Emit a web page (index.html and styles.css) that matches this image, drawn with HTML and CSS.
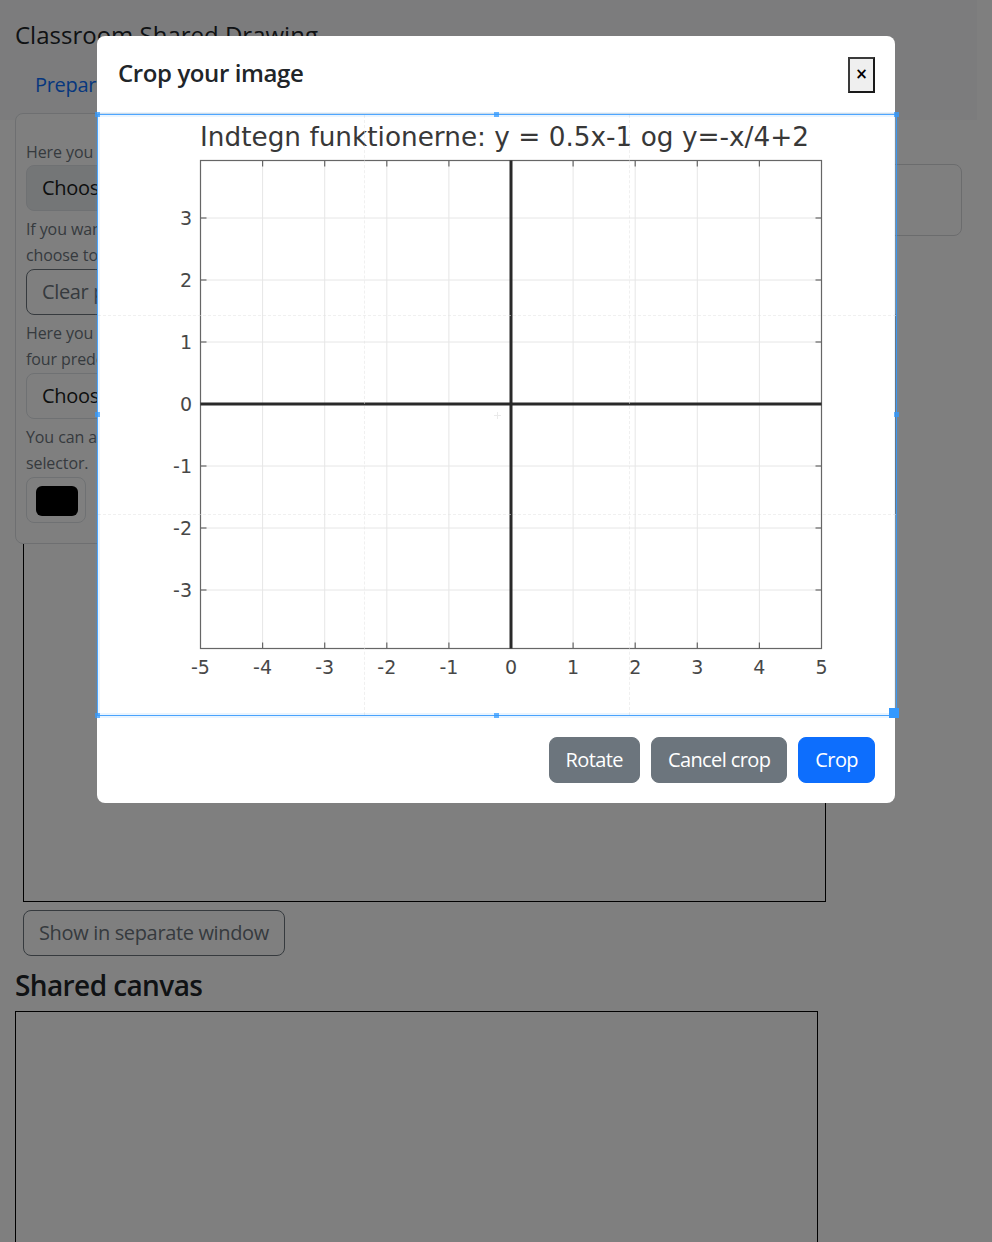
FILE: index.html
```html
<!DOCTYPE html>
<html lang="en">
<head>
<meta charset="utf-8">
<title>Classroom Shared Drawing</title>
<link rel="stylesheet" href="styles.css">
</head>
<body>
  <header class="topbar">
    <div class="brand">Classroom Shared Drawing</div>
    <nav class="tabs">
      <a class="tab-link" href="#">Prepare</a>
    </nav>
  </header>

  <main class="workspace">
    <section class="board">
      <div class="board-canvas"></div>
      <div class="side">
        <div class="side-box"></div>
      </div>
      <aside class="tools-card">
        <p class="tool-text first">Here you can</p>
        <div class="select select-filled">Choose file</div>
        <p class="tool-text">If you want<br>choose to</p>
        <div class="btn-outline">Clear picture</div>
        <p class="tool-text">Here you can<br>four predefined</p>
        <div class="select">Choose one</div>
        <p class="tool-text">You can also<br>selector.</p>
        <div class="color-input"><span class="swatch"></span></div>
      </aside>
    </section>
    <div class="btn-outline separate">Show in separate window</div>
    <h2 class="section-title">Shared canvas</h2>
    <div class="shared-canvas"></div>
  </main>

  <div class="backdrop"></div>

  <div class="modal">
    <div class="modal-content">
      <div class="modal-header">
        <h5 class="modal-title">Crop your image</h5>
        <button class="close-btn" type="button">×</button>
      </div>
      <div class="modal-body">
        <svg class="chart" width="798" height="601" viewBox="0 0 798 601" xmlns="http://www.w3.org/2000/svg">
          <rect x="0" y="0" width="798" height="601" fill="#ffffff"/>
          <text x="407.5" y="32" text-anchor="middle" font-family="DejaVu Sans, sans-serif" font-size="27" fill="#222" textLength="609" lengthAdjust="spacingAndGlyphs">Indtegn funktionerne: y = 0.5x-1 og y=-x/4+2</text>
          <g stroke="#e4e4e4" stroke-width="1">
            <line x1="165.6" y1="46.5" x2="165.6" y2="534.5"/>
            <line x1="227.7" y1="46.5" x2="227.7" y2="534.5"/>
            <line x1="289.8" y1="46.5" x2="289.8" y2="534.5"/>
            <line x1="351.9" y1="46.5" x2="351.9" y2="534.5"/>
            <line x1="476.1" y1="46.5" x2="476.1" y2="534.5"/>
            <line x1="538.2" y1="46.5" x2="538.2" y2="534.5"/>
            <line x1="600.3" y1="46.5" x2="600.3" y2="534.5"/>
            <line x1="662.4" y1="46.5" x2="662.4" y2="534.5"/>
            <line x1="103.5" y1="104" x2="724.5" y2="104"/>
            <line x1="103.5" y1="166" x2="724.5" y2="166"/>
            <line x1="103.5" y1="228" x2="724.5" y2="228"/>
            <line x1="103.5" y1="352" x2="724.5" y2="352"/>
            <line x1="103.5" y1="414" x2="724.5" y2="414"/>
            <line x1="103.5" y1="476" x2="724.5" y2="476"/>
          </g>
          <g stroke="#555" stroke-width="1.2">
            <line x1="165.6" y1="534.5" x2="165.6" y2="528.5"/>
            <line x1="227.7" y1="534.5" x2="227.7" y2="528.5"/>
            <line x1="289.8" y1="534.5" x2="289.8" y2="528.5"/>
            <line x1="351.9" y1="534.5" x2="351.9" y2="528.5"/>
            <line x1="476.1" y1="534.5" x2="476.1" y2="528.5"/>
            <line x1="538.2" y1="534.5" x2="538.2" y2="528.5"/>
            <line x1="600.3" y1="534.5" x2="600.3" y2="528.5"/>
            <line x1="662.4" y1="534.5" x2="662.4" y2="528.5"/>
            <line x1="165.6" y1="46.5" x2="165.6" y2="52.5"/>
            <line x1="227.7" y1="46.5" x2="227.7" y2="52.5"/>
            <line x1="289.8" y1="46.5" x2="289.8" y2="52.5"/>
            <line x1="351.9" y1="46.5" x2="351.9" y2="52.5"/>
            <line x1="476.1" y1="46.5" x2="476.1" y2="52.5"/>
            <line x1="538.2" y1="46.5" x2="538.2" y2="52.5"/>
            <line x1="600.3" y1="46.5" x2="600.3" y2="52.5"/>
            <line x1="662.4" y1="46.5" x2="662.4" y2="52.5"/>
            <line x1="103.5" y1="104" x2="109.5" y2="104"/>
            <line x1="103.5" y1="166" x2="109.5" y2="166"/>
            <line x1="103.5" y1="228" x2="109.5" y2="228"/>
            <line x1="103.5" y1="352" x2="109.5" y2="352"/>
            <line x1="103.5" y1="414" x2="109.5" y2="414"/>
            <line x1="103.5" y1="476" x2="109.5" y2="476"/>
            <line x1="724.5" y1="104" x2="718.5" y2="104"/>
            <line x1="724.5" y1="166" x2="718.5" y2="166"/>
            <line x1="724.5" y1="228" x2="718.5" y2="228"/>
            <line x1="724.5" y1="352" x2="718.5" y2="352"/>
            <line x1="724.5" y1="414" x2="718.5" y2="414"/>
            <line x1="724.5" y1="476" x2="718.5" y2="476"/>
          </g>
          <rect x="103.5" y="46.5" width="621" height="488" fill="none" stroke="#555" stroke-width="1.2"/>
          <line x1="414" y1="46.5" x2="414" y2="534.5" stroke="#111" stroke-width="3"/>
          <line x1="103.5" y1="290" x2="724.5" y2="290" stroke="#111" stroke-width="3"/>
          <g font-family="DejaVu Sans, sans-serif" font-size="19" fill="#333" text-anchor="middle">
            <text x="103.5" y="560">-5</text>
            <text x="165.6" y="560">-4</text>
            <text x="227.7" y="560">-3</text>
            <text x="289.8" y="560">-2</text>
            <text x="351.9" y="560">-1</text>
            <text x="414" y="560">0</text>
            <text x="476.1" y="560">1</text>
            <text x="538.2" y="560">2</text>
            <text x="600.3" y="560">3</text>
            <text x="662.4" y="560">4</text>
            <text x="724.5" y="560">5</text>
          </g>
          <g font-family="DejaVu Sans, sans-serif" font-size="19" fill="#333" text-anchor="end">
            <text x="95" y="111">3</text>
            <text x="95" y="173">2</text>
            <text x="95" y="235">1</text>
            <text x="95" y="297">0</text>
            <text x="95" y="359">-1</text>
            <text x="95" y="421">-2</text>
            <text x="95" y="483">-3</text>
          </g>
        </svg>
        <div class="crop-box">
          <span class="dashed dashed-h"></span>
          <span class="dashed dashed-v"></span>
          <span class="center-mark"></span>
          <span class="line line-n"></span>
          <span class="line line-s"></span>
          <span class="line line-e"></span>
          <span class="line line-w"></span>
          <span class="point point-nw"></span>
          <span class="point point-n"></span>
          <span class="point point-ne"></span>
          <span class="point point-e"></span>
          <span class="point point-w"></span>
          <span class="point point-sw"></span>
          <span class="point point-s"></span>
          <span class="point point-se"></span>
        </div>
      </div>
      <div class="modal-footer">
        <button class="btn btn-secondary" type="button">Rotate</button>
        <button class="btn btn-secondary" type="button">Cancel crop</button>
        <button class="btn btn-primary" type="button">Crop</button>
      </div>
    </div>
  </div>
</body>
</html>
```

FILE: styles.css
```css
* { box-sizing: border-box; }

html, body {
  margin: 0;
  padding: 0;
}

body {
  padding-right: 15px;
  background: #ffffff;
  color: #212529;
  font-family: "Open Sans", "Noto Sans", sans-serif;
  font-size: 16px;
  overflow: hidden;
  height: 1242px;
}

/* ---------- page header ---------- */
.topbar {
  height: 120px;
  background: #f8f9fa;
  padding: 20px 15px 0 15px;
}

.brand {
  font-size: 24px;
  line-height: 30px;
  color: #212529;
  letter-spacing: 0;
}

.tabs {
  display: flex;
  margin-top: 15px;
}

.tab-link {
  display: block;
  padding: 8px 20px;
  font-size: 20px;
  line-height: 24px;
  color: #0d6efd;
  text-decoration: none;
  letter-spacing: -0.3px;
}

/* ---------- workspace ---------- */
.workspace {
  padding: 10px 15px 0 15px;
}

.board {
  position: relative;
  display: flex;
  align-items: flex-start;
}

.board-canvas {
  margin-left: 8px;
  width: 803px;
  height: 772px;
  border: 1px solid #000;
  background: #fff;
}

.side {
  flex: 1;
  margin-left: 14px;
  padding-top: 34px;
}

.side-box {
  height: 72px;
  border: 1px solid #d6d8db;
  border-radius: 8px;
  background: #fff;
}

.tools-card {
  position: absolute;
  top: -17px;
  left: 0;
  width: 140px;
  overflow: hidden;
  background: #fff;
  border: 1px solid #dcdfe3;
  border-radius: 8px;
  padding: 25px 10px 20px 10px;
}

.tool-text {
  margin: 5px 0 1px;
  font-size: 16px;
  line-height: 26px;
  color: #6c757d;
  letter-spacing: -0.1px;
  white-space: nowrap;
}

.tool-text.first {
  margin-top: 0;
  margin-bottom: 0;
}

.select {
  height: 46px;
  width: 300px;
  border: 1px solid #dee2e6;
  border-radius: 8px;
  padding: 7px 15px;
  font-size: 20px;
  line-height: 30px;
  color: #1a1d20;
  background: #fff;
  letter-spacing: -0.3px;
  white-space: nowrap;
}

.select-filled {
  background: #e9ecef;
}

.btn-outline {
  display: inline-block;
  height: 46px;
  border: 1px solid #6c757d;
  border-radius: 8px;
  padding: 7px 15px;
  font-size: 20px;
  line-height: 30px;
  color: #6c757d;
  background: transparent;
  letter-spacing: -0.35px;
  white-space: nowrap;
}

.tools-card .btn-outline {
  display: block;
  width: 180px;
}

.color-input {
  width: 60px;
  height: 46px;
  border: 1px solid #dee2e6;
  border-radius: 8px;
  padding: 8px 8px 7px 9px;
}

.swatch {
  display: block;
  width: 42px;
  height: 30px;
  background: #000;
  border-radius: 6px;
}

.separate {
  margin: 8px 0 0 8px;
}

.section-title {
  margin: 12px 0 9px;
  font-size: 28px;
  line-height: 34px;
  font-weight: 600;
  color: #212529;
  letter-spacing: -0.6px;
}

.shared-canvas {
  width: 803px;
  height: 400px;
  border: 1px solid #000;
  background: #fff;
}

/* ---------- modal ---------- */
.backdrop {
  position: fixed;
  inset: 0;
  background: rgba(0, 0, 0, 0.5);
}

.modal {
  position: fixed;
  inset: 0;
  display: flex;
  justify-content: center;
  align-items: flex-start;
  padding-top: 36px;
}

.modal-content {
  width: 798px;
  background: #fff;
  border-radius: 8px;
}

.modal-header {
  height: 78px;
  display: flex;
  align-items: center;
  justify-content: space-between;
  padding: 0 20px 0 21px;
  border-bottom: 1px solid #dee2e6;
}

.modal-title {
  margin: 0 0 3px;
  font-size: 24px;
  line-height: 30px;
  font-weight: 600;
  color: #212529;
  letter-spacing: -0.4px;
}

.close-btn {
  width: 27px;
  height: 36px;
  padding: 0;
  background: #efefef;
  border: 2px solid;
  border-color: #3a3a3a #1a1a1a #1a1a1a #3a3a3a;
  font-family: "DejaVu Sans", sans-serif;
  font-size: 15px;
  font-weight: bold;
  line-height: 1;
  color: #000;
}

.modal-body {
  position: relative;
  height: 601px;
}

.chart {
  display: block;
}

.crop-box {
  position: absolute;
  left: 0;
  top: 0;
  width: 800px;
  height: 602px;
  border: 1px solid rgba(51, 153, 255, 0.85);
  background: rgba(255, 255, 255, 0.1);
}

.dashed {
  position: absolute;
  display: block;
  border: 0 dashed #e2e2e2;
  opacity: 0.5;
}

.dashed-h {
  left: 0;
  right: 0;
  top: 33.333%;
  height: 33.333%;
  border-top-width: 1px;
  border-bottom-width: 1px;
}

.dashed-v {
  top: 0;
  bottom: 0;
  left: 33.333%;
  width: 33.333%;
  border-left-width: 1px;
  border-right-width: 1px;
}

.center-mark {
  position: absolute;
  left: 50%;
  top: 50%;
  width: 0;
  height: 0;
  opacity: 0.75;
}

.center-mark::before,
.center-mark::after {
  content: "";
  position: absolute;
  background: #e4e4e4;
}

.center-mark::before {
  left: -3px;
  top: 0;
  width: 7px;
  height: 1px;
}

.center-mark::after {
  left: 0;
  top: -3px;
  width: 1px;
  height: 7px;
}

.line {
  position: absolute;
  display: block;
  background: #39f;
  opacity: 0.1;
}

.line-n { top: -3px; left: 0; right: 0; height: 5px; }
.line-s { bottom: -3px; left: 0; right: 0; height: 5px; }
.line-e { right: -3px; top: 0; bottom: 0; width: 5px; }
.line-w { left: -3px; top: 0; bottom: 0; width: 5px; }

.point {
  position: absolute;
  display: block;
  width: 5px;
  height: 5px;
  background: #39f;
  opacity: 0.75;
}

.point-nw { left: -3px; top: -3px; }
.point-n  { left: 50%; top: -3px; margin-left: -3px; }
.point-ne { right: -3px; top: -3px; }
.point-e  { right: -3px; top: 50%; margin-top: -3px; }
.point-w  { left: -3px; top: 50%; margin-top: -3px; }
.point-sw { left: -3px; bottom: -3px; }
.point-s  { left: 50%; bottom: -3px; margin-left: -3px; }
.point-se {
  right: -3px;
  bottom: -3px;
  width: 10px;
  height: 10px;
  opacity: 1;
}

.modal-footer {
  height: 88px;
  display: flex;
  justify-content: flex-end;
  align-items: center;
  gap: 11px;
  padding: 0 20px;
  border-top: 1px solid #dee2e6;
}

.btn {
  height: 46px;
  padding: 7px 16px;
  border: 1px solid transparent;
  border-radius: 8px;
  font-family: "Open Sans", "Noto Sans", sans-serif;
  font-size: 20px;
  line-height: 30px;
  color: #fff;
  letter-spacing: -0.6px;
}

.btn-secondary {
  background: #6c757d;
  border-color: #6c757d;
}

.btn-primary {
  background: #0d6efd;
  border-color: #0d6efd;
}
```
